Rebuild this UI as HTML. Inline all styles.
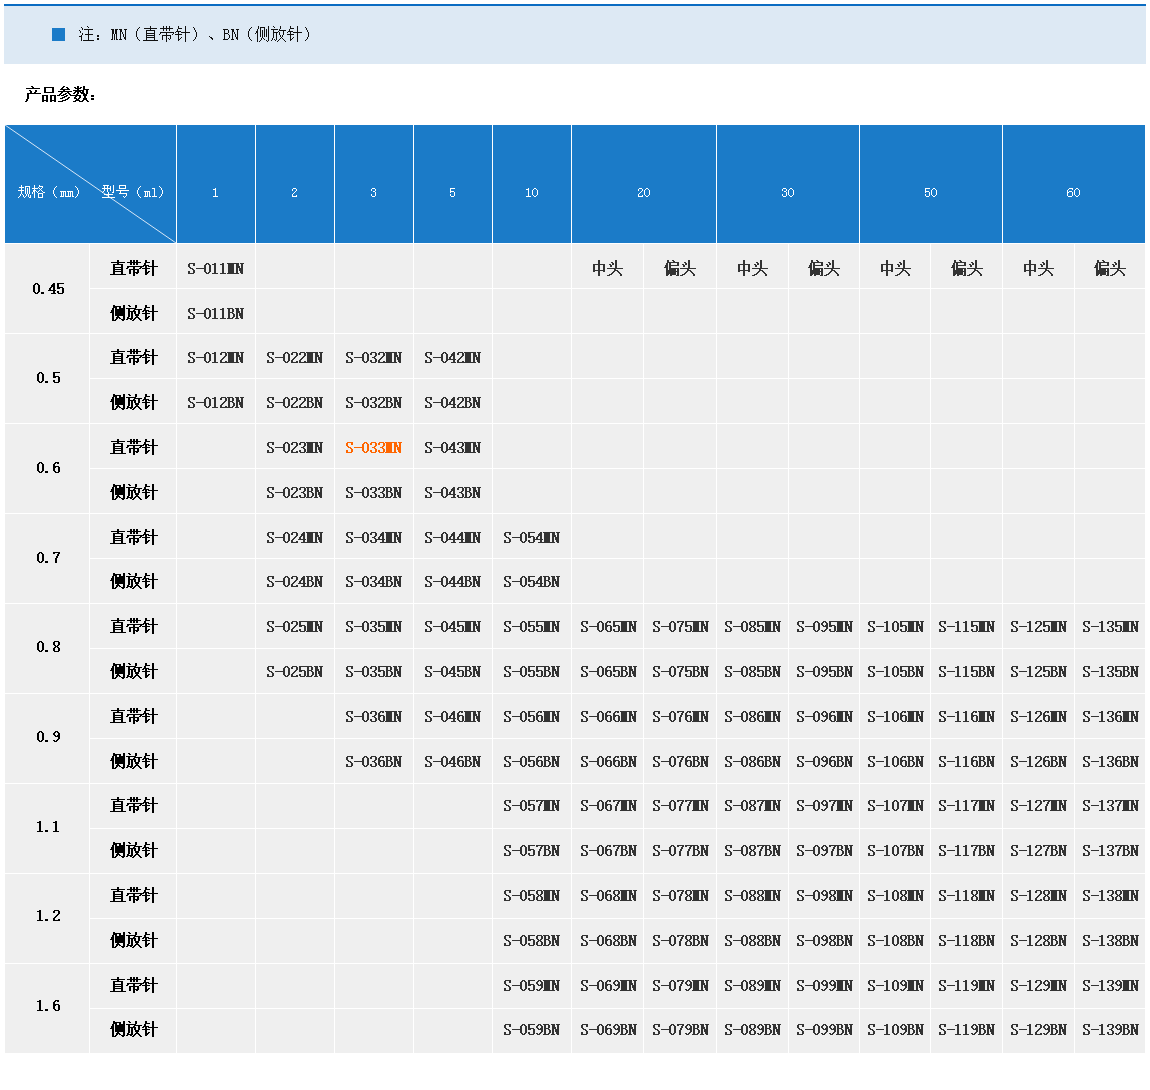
<!DOCTYPE html>
<html lang="zh-CN"><head><meta charset="utf-8"><title>产品参数</title>
<style>
html,body{margin:0;padding:0;background:#fff;}
body{width:1150px;height:1090px;position:relative;overflow:hidden;font-family:"Liberation Serif",serif;color:#222;}
.sr{position:absolute;width:1px;height:1px;overflow:hidden;clip:rect(0 0 0 0);white-space:nowrap;}
svg.g{position:absolute;display:block;overflow:visible;}
svg.m{fill:#333;}
svg.o{fill:#ff6600;}
svg.k{fill:#000;}
svg.w{fill:#fff;}
.note{position:absolute;left:4px;top:4px;width:1142px;height:58px;border-top:2px solid #0a6cc2;background:#dde9f4;}
.note .sq{position:absolute;left:48px;top:22px;width:13px;height:13px;background:#1b7bc8;}
table{position:absolute;left:4px;top:124px;width:1142px;border-collapse:separate;border-spacing:1px;table-layout:fixed;background:#fff;}
th{background:#1b7bc8;color:#fff;font-weight:normal;height:118px;padding:0;position:relative;}
td{background:#efefef;height:44px;padding:0;position:relative;}
</style></head><body>
<svg width="0" height="0" style="position:absolute"><defs><path id="zdz" d="M7 0h2v2h-2zM20 0h2v2h-2zM23 0h2v2h-2zM26 0h2v2h-2zM35 0h2v2h-2zM1 2h14v1h-14zM17 2h14v1h-14zM35 2h5v1h-5zM7 3h2v1h-2zM20 3h2v2h-2zM23 3h2v2h-2zM26 3h2v2h-2zM34 3h2v2h-2zM3 4h10v1h-10zM42 0h2v6h-2zM33 5h6v1h-6zM3 5h2v2h-2zM11 5h2v2h-2zM17 6h17v1h-17zM38 6h10v1h-10zM35 6h2v2h-2zM3 7h10v1h-10zM17 7h2v1h-2zM30 7h2v1h-2zM23 7h2v2h-2zM3 8h2v1h-2zM11 8h2v1h-2zM16 8h2v1h-2zM29 8h2v1h-2zM32 8h8v1h-8zM3 9h10v1h-10zM19 9h10v1h-10zM3 10h2v1h-2zM11 10h2v1h-2zM35 9h2v3h-2zM23 10h2v2h-2zM27 10h2v2h-2zM3 11h10v1h-10zM38 11h2v1h-2zM23 12h6v1h-6zM35 12h4v1h-4zM19 10h2v4h-2zM3 12h2v2h-2zM11 12h2v2h-2zM26 13h2v1h-2zM35 13h3v1h-3zM0 14h16v1h-16zM35 14h2v1h-2zM42 7h2v9h-2zM23 13h2v3h-2z"/><path id="cfz" d="M3 0h2v1h-2zM18 0h2v1h-2zM35 0h2v2h-2zM3 1h8v1h-8zM19 1h2v1h-2zM13 0h2v3h-2zM25 0h2v3h-2zM3 2h4v1h-4zM9 2h2v1h-2zM35 2h5v1h-5zM5 3h2v1h-2zM9 3h6v1h-6zM16 3h10v1h-10zM2 3h2v2h-2zM34 3h2v2h-2zM24 4h8v1h-8zM42 0h2v6h-2zM18 4h2v2h-2zM23 5h2v1h-2zM33 5h6v1h-6zM1 5h3v2h-3zM18 6h8v1h-8zM32 6h2v1h-2zM38 6h10v1h-10zM35 6h2v2h-2zM0 7h4v1h-4zM28 5h2v4h-2zM24 7h2v2h-2zM32 8h8v1h-8zM5 4h10v7h-10zM25 9h4v2h-4zM18 7h2v5h-2zM35 9h2v3h-2zM7 11h2v1h-2zM26 11h2v1h-2zM38 11h2v1h-2zM21 7h2v6h-2zM6 12h4v1h-4zM17 12h2v1h-2zM25 12h4v1h-4zM35 12h4v1h-4zM13 11h2v3h-2zM6 13h2v1h-2zM9 13h2v1h-2zM17 13h6v1h-6zM24 13h2v1h-2zM28 13h2v1h-2zM35 13h3v1h-3zM2 8h2v7h-2zM5 14h2v1h-2zM11 14h4v1h-4zM16 14h2v1h-2zM20 14h2v1h-2zM23 14h2v1h-2zM29 14h2v1h-2zM35 14h2v1h-2zM42 7h2v9h-2zM2 15h4v1h-4zM12 15h2v1h-2zM22 15h2v1h-2zM30 15h2v1h-2z"/><path id="zt" d="M18 2h2v1h-2zM5 0h2v4h-2zM19 3h2v2h-2zM0 4h12v1h-12zM16 4h2v1h-2zM17 5h2v2h-2zM22 0h2v8h-2zM14 8h16v1h-16zM0 5h2v5h-2zM5 5h2v5h-2zM10 5h2v5h-2zM21 9h2v1h-2zM0 10h12v1h-12zM21 10h4v1h-4zM0 11h2v1h-2zM10 11h2v1h-2zM20 11h2v1h-2zM24 11h2v1h-2zM19 12h2v1h-2zM25 12h2v1h-2zM18 13h2v1h-2zM26 13h2v1h-2zM16 14h3v1h-3zM5 11h2v5h-2zM27 14h2v2h-2zM14 15h3v1h-3z"/><path id="pt" d="M8 0h2v1h-2zM3 0h2v2h-2zM9 1h2v1h-2zM3 2h12v1h-12zM20 2h2v1h-2zM2 3h2v2h-2zM5 3h2v2h-2zM13 3h2v2h-2zM21 3h2v2h-2zM18 4h2v1h-2zM5 5h10v1h-10zM1 5h3v2h-3zM19 5h2v2h-2zM24 0h2v8h-2zM5 6h2v2h-2zM0 7h4v1h-4zM5 8h10v1h-10zM16 8h16v1h-16zM2 8h2v2h-2zM5 9h7v1h-7zM23 9h2v1h-2zM13 9h2v2h-2zM2 10h10v1h-10zM23 10h4v1h-4zM2 11h13v1h-13zM22 11h2v1h-2zM26 11h2v1h-2zM21 12h2v1h-2zM27 12h2v1h-2zM2 12h10v2h-10zM20 13h2v1h-2zM28 13h2v1h-2zM13 12h2v3h-2zM2 14h3v1h-3zM6 14h6v1h-6zM18 14h3v1h-3zM29 14h2v2h-2zM2 15h2v1h-2zM6 15h2v1h-2zM12 15h3v1h-3zM16 15h3v1h-3z"/><path id="ttl" d="M6 0h2v1h-2zM38 0h2v1h-2zM52 0h2v2h-2zM7 1h2v1h-2zM19 1h10v1h-10zM37 1h2v1h-2zM41 1h2v1h-2zM49 1h2v1h-2zM55 1h2v1h-2zM58 0h2v3h-2zM1 2h14v1h-14zM36 2h2v1h-2zM42 2h2v1h-2zM50 2h6v1h-6zM35 3h10v1h-10zM52 3h2v1h-2zM58 3h6v1h-6zM4 4h2v1h-2zM38 4h2v1h-2zM48 4h11v1h-11zM19 2h2v4h-2zM27 2h2v4h-2zM10 4h2v2h-2zM33 5h14v1h-14zM50 5h6v1h-6zM57 5h2v1h-2zM5 5h2v2h-2zM9 6h2v1h-2zM19 6h10v1h-10zM36 6h2v1h-2zM42 6h2v1h-2zM49 6h2v1h-2zM55 6h4v1h-4zM61 4h2v4h-2zM52 6h2v2h-2zM2 7h14v1h-14zM35 7h2v1h-2zM40 7h2v1h-2zM43 7h2v1h-2zM48 7h2v1h-2zM56 7h4v1h-4zM34 8h2v1h-2zM38 8h3v1h-3zM44 8h2v1h-2zM51 8h2v1h-2zM58 8h4v2h-4zM17 9h6v1h-6zM25 9h6v1h-6zM32 9h3v1h-3zM36 9h3v1h-3zM41 9h2v1h-2zM45 9h11v1h-11zM66 9h3v2h-3zM39 10h3v1h-3zM50 10h2v1h-2zM54 10h2v2h-2zM59 10h2v2h-2zM37 11h3v1h-3zM43 11h2v1h-2zM49 11h2v1h-2zM2 8h2v5h-2zM35 12h3v1h-3zM42 12h2v1h-2zM49 12h3v1h-3zM53 12h2v1h-2zM17 10h2v4h-2zM21 10h2v4h-2zM25 10h2v4h-2zM29 10h2v4h-2zM58 12h4v2h-4zM66 12h3v2h-3zM40 13h3v1h-3zM51 13h3v1h-3zM1 13h2v2h-2zM17 14h6v1h-6zM25 14h6v1h-6zM37 14h4v1h-4zM50 14h5v1h-5zM57 14h2v1h-2zM61 14h2v1h-2zM0 15h2v1h-2zM17 15h2v1h-2zM21 15h2v1h-2zM25 15h2v1h-2zM29 15h2v1h-2zM33 15h5v1h-5zM48 15h3v1h-3zM54 15h4v1h-4zM62 15h2v1h-2z"/><path id="note" d="M8 0h1v1h-1zM194 0h1v1h-1zM71 0h1v2h-1zM84 0h1v2h-1zM87 0h1v2h-1zM90 0h1v2h-1zM99 0h1v2h-1zM211 0h1v2h-1zM2 1h1v1h-1zM9 1h1v1h-1zM60 1h1v1h-1zM114 1h1v1h-1zM172 1h1v1h-1zM181 1h5v1h-5zM195 1h1v1h-1zM226 1h1v1h-1zM179 0h1v3h-1zM201 0h1v3h-1zM59 2h1v1h-1zM65 2h13v1h-13zM81 2h13v1h-13zM99 2h4v1h-4zM171 2h1v1h-1zM211 2h4v1h-4zM3 2h1v2h-1zM115 2h1v2h-1zM227 2h1v2h-1zM5 3h9v1h-9zM32 3h3v1h-3zM36 3h3v1h-3zM40 3h3v1h-3zM45 3h3v1h-3zM71 3h1v1h-1zM144 3h5v1h-5zM152 3h3v1h-3zM157 3h3v1h-3zM192 3h7v1h-7zM200 3h1v1h-1zM58 3h1v2h-1zM84 3h1v2h-1zM87 3h1v2h-1zM90 3h1v2h-1zM98 3h1v2h-1zM170 3h1v2h-1zM178 3h1v2h-1zM210 3h1v2h-1zM0 4h1v1h-1zM67 4h9v1h-9zM200 4h7v1h-7zM106 0h1v6h-1zM218 0h1v6h-1zM41 4h2v2h-2zM116 4h1v2h-1zM153 4h2v2h-2zM194 4h1v2h-1zM228 4h1v2h-1zM97 5h5v1h-5zM199 5h1v1h-1zM209 5h5v1h-5zM145 4h1v3h-1zM149 4h1v3h-1zM1 5h1v2h-1zM67 5h1v2h-1zM75 5h1v2h-1zM177 5h2v2h-2zM81 6h14v1h-14zM96 6h1v1h-1zM102 6h9v1h-9zM194 6h5v1h-5zM208 6h1v1h-1zM214 6h9v1h-9zM9 4h1v4h-1zM33 4h2v4h-2zM36 4h2v4h-2zM43 6h1v2h-1zM99 6h1v2h-1zM155 6h1v2h-1zM211 6h1v2h-1zM67 7h9v1h-9zM81 7h1v1h-1zM94 7h1v1h-1zM145 7h4v1h-4zM176 7h1v1h-1zM204 5h1v4h-1zM200 6h1v3h-1zM3 7h1v2h-1zM87 7h1v2h-1zM6 8h8v1h-8zM67 8h1v1h-1zM75 8h1v1h-1zM80 8h1v1h-1zM93 8h1v1h-1zM96 8h7v1h-7zM149 8h1v1h-1zM208 8h7v1h-7zM2 9h1v1h-1zM67 9h9v1h-9zM83 9h9v1h-9zM181 2h1v9h-1zM185 2h1v9h-1zM187 3h1v8h-1zM46 4h1v7h-1zM158 4h1v7h-1zM57 5h1v6h-1zM169 5h1v6h-1zM117 6h1v5h-1zM229 6h1v5h-1zM44 8h1v3h-1zM156 8h1v3h-1zM18 9h2v2h-2zM201 9h1v2h-1zM203 9h1v2h-1zM0 10h3v1h-3zM67 10h1v1h-1zM75 10h1v1h-1zM130 10h1v1h-1zM183 4h1v8h-1zM194 7h1v5h-1zM150 9h1v3h-1zM67 11h9v1h-9zM102 11h1v1h-1zM131 11h2v1h-2zM202 11h1v1h-1zM214 11h1v1h-1zM41 6h1v7h-1zM153 6h1v7h-1zM33 8h1v5h-1zM37 8h1v5h-1zM145 8h1v5h-1zM99 9h1v4h-1zM211 9h1v4h-1zM91 10h1v3h-1zM45 11h2v2h-2zM58 11h1v2h-1zM116 11h1v2h-1zM157 11h2v2h-2zM170 11h1v2h-1zM228 11h1v2h-1zM89 12h1v1h-1zM101 12h1v1h-1zM132 12h2v1h-2zM149 12h1v1h-1zM184 12h1v1h-1zM201 12h1v1h-1zM203 12h1v1h-1zM213 12h1v1h-1zM197 7h1v7h-1zM35 8h1v6h-1zM9 9h1v5h-1zM83 10h1v4h-1zM18 12h2v2h-2zM67 12h1v2h-1zM75 12h1v2h-1zM182 12h1v2h-1zM193 12h1v2h-1zM32 13h2v1h-2zM37 13h2v1h-2zM40 13h3v1h-3zM46 13h1v1h-1zM59 13h1v1h-1zM90 13h1v1h-1zM99 13h2v1h-2zM115 13h1v1h-1zM133 13h1v1h-1zM144 13h5v1h-5zM152 13h3v1h-3zM158 13h1v1h-1zM171 13h1v1h-1zM185 13h1v1h-1zM195 13h1v1h-1zM200 13h1v1h-1zM204 13h1v1h-1zM211 13h2v1h-2zM227 13h1v1h-1zM189 0h1v15h-1zM2 11h1v4h-1zM4 14h11v1h-11zM60 14h1v1h-1zM64 14h15v1h-15zM99 14h1v1h-1zM114 14h1v1h-1zM172 14h1v1h-1zM181 14h1v1h-1zM187 14h1v1h-1zM192 14h1v1h-1zM196 14h1v1h-1zM199 14h1v1h-1zM205 14h1v1h-1zM211 14h1v1h-1zM226 14h1v1h-1zM106 7h1v9h-1zM178 7h1v9h-1zM218 7h1v9h-1zM87 10h1v6h-1zM180 15h1v1h-1zM188 15h1v1h-1zM198 15h1v1h-1zM206 15h1v1h-1z"/><path id="gg" d="M21 0h1v1h-1zM3 0h1v2h-1zM7 1h5v1h-5zM21 1h4v1h-4zM38 1h1v1h-1zM57 1h1v1h-1zM16 0h1v3h-1zM1 2h5v1h-5zM20 2h1v1h-1zM24 2h1v1h-1zM37 2h1v1h-1zM58 2h1v1h-1zM14 3h6v1h-6zM21 3h1v1h-1zM23 3h1v1h-1zM3 3h1v2h-1zM36 3h1v2h-1zM59 3h1v2h-1zM16 4h1v1h-1zM22 4h1v1h-1zM0 5h6v1h-6zM15 5h3v1h-3zM21 5h1v1h-1zM23 5h1v1h-1zM15 6h2v1h-2zM18 6h1v1h-1zM20 6h1v1h-1zM24 6h1v1h-1zM42 6h6v1h-6zM49 6h6v1h-6zM19 7h1v1h-1zM25 7h2v1h-2zM7 2h1v7h-1zM11 2h1v7h-1zM9 3h1v6h-1zM35 5h1v4h-1zM60 5h1v4h-1zM3 6h1v3h-1zM14 7h1v2h-1zM20 8h5v1h-5zM4 9h1v1h-1zM43 7h1v4h-1zM45 7h1v4h-1zM47 7h1v4h-1zM50 7h1v4h-1zM52 7h1v4h-1zM54 7h1v4h-1zM2 9h1v2h-1zM8 9h1v2h-1zM36 9h1v2h-1zM59 9h1v2h-1zM10 9h1v3h-1zM20 9h1v3h-1zM24 9h1v3h-1zM5 10h1v2h-1zM12 10h1v2h-1zM1 11h1v1h-1zM7 11h1v1h-1zM37 11h1v1h-1zM42 11h4v1h-4zM47 11h6v1h-6zM54 11h2v1h-2zM58 11h1v1h-1zM16 7h1v6h-1zM0 12h1v1h-1zM6 12h1v1h-1zM11 12h2v1h-2zM20 12h5v1h-5zM38 12h1v1h-1zM57 12h1v1h-1z"/><path id="xh" d="M1 0h6v1h-6zM17 0h7v1h-7zM38 1h1v1h-1zM57 1h1v1h-1zM2 1h1v2h-1zM5 1h1v2h-1zM8 1h1v2h-1zM17 1h1v2h-1zM23 1h1v2h-1zM37 2h1v1h-1zM58 2h1v1h-1zM0 3h9v1h-9zM17 3h7v1h-7zM50 3h3v1h-3zM36 3h1v2h-1zM59 3h1v2h-1zM2 4h1v2h-1zM8 4h1v2h-1zM14 5h13v1h-13zM11 0h1v7h-1zM5 4h1v3h-1zM1 6h1v1h-1zM42 6h6v1h-6zM18 6h1v2h-1zM0 7h1v1h-1zM10 7h2v1h-2zM35 5h1v4h-1zM60 5h1v4h-1zM6 7h1v2h-1zM17 8h8v1h-8zM2 9h9v1h-9zM52 4h1v7h-1zM43 7h1v4h-1zM45 7h1v4h-1zM47 7h1v4h-1zM24 9h1v2h-1zM36 9h1v2h-1zM59 9h1v2h-1zM6 10h1v2h-1zM21 11h1v1h-1zM23 11h1v1h-1zM37 11h1v1h-1zM42 11h4v1h-4zM47 11h2v1h-2zM50 11h5v1h-5zM58 11h1v1h-1zM0 12h13v1h-13zM22 12h1v1h-1zM38 12h1v1h-1zM57 12h1v1h-1z"/><path id="bS" d="M2 0h6v1h-6zM6 1h2v2h-2zM1 1h2v3h-2zM2 4h2v1h-2zM3 5h3v1h-3zM5 6h2v1h-2zM6 7h2v3h-2zM1 8h2v2h-2zM1 10h6v1h-6z"/><path id="bd" d="M1 5h8v1h-8z"/><path id="bp" d="M1 9h3v2h-3z"/><path id="b0" d="M3 0h3v1h-3zM2 1h2v1h-2zM5 1h2v1h-2zM1 2h2v7h-2zM6 2h2v7h-2zM2 9h2v1h-2zM5 9h2v1h-2zM3 10h3v1h-3z"/><path id="b1" d="M3 0h2v1h-2zM1 1h4v1h-4zM3 2h2v8h-2zM1 10h6v1h-6z"/><path id="b2" d="M2 0h5v1h-5zM1 1h2v2h-2zM6 1h2v3h-2zM5 4h2v1h-2zM4 5h2v1h-2zM3 6h2v1h-2zM2 7h2v1h-2zM1 8h2v2h-2zM6 9h2v1h-2zM1 10h7v1h-7z"/><path id="b3" d="M2 0h5v1h-5zM1 1h2v2h-2zM6 1h2v3h-2zM5 4h2v1h-2zM3 5h3v1h-3zM5 6h2v1h-2zM6 7h2v3h-2zM1 8h2v2h-2zM2 10h5v1h-5z"/><path id="b4" d="M5 0h2v1h-2zM4 1h3v1h-3zM3 2h4v2h-4zM2 4h2v1h-2zM5 4h2v3h-2zM1 5h2v2h-2zM0 7h8v1h-8zM5 8h2v2h-2zM3 10h5v1h-5z"/><path id="b5" d="M1 0h7v1h-7zM1 1h2v3h-2zM1 4h6v1h-6zM1 5h3v1h-3zM6 5h2v5h-2zM1 8h2v2h-2zM2 10h5v1h-5z"/><path id="b6" d="M3 0h4v1h-4zM2 1h2v1h-2zM5 1h2v1h-2zM1 2h2v2h-2zM1 4h6v1h-6zM1 5h3v1h-3zM1 6h2v3h-2zM6 5h2v5h-2zM2 9h2v1h-2zM3 10h4v1h-4z"/><path id="b7" d="M1 0h7v1h-7zM1 1h2v1h-2zM6 1h2v1h-2zM5 2h2v2h-2zM4 4h2v2h-2zM3 6h2v5h-2z"/><path id="b8" d="M2 0h5v1h-5zM1 1h2v3h-2zM6 1h2v3h-2zM2 4h2v1h-2zM5 4h2v1h-2zM3 5h3v1h-3zM2 6h2v1h-2zM5 6h2v1h-2zM1 7h2v3h-2zM6 7h2v3h-2zM2 10h5v1h-5z"/><path id="b9" d="M3 0h3v1h-3zM2 1h2v1h-2zM5 1h2v1h-2zM1 2h2v2h-2zM6 2h2v2h-2zM2 4h2v1h-2zM5 4h3v1h-3zM3 5h5v1h-5zM6 6h2v2h-2zM5 8h2v1h-2zM1 9h2v1h-2zM4 9h2v1h-2zM2 10h3v1h-3z"/><path id="bB" d="M0 0h6v1h-6zM1 1h2v3h-2zM5 1h2v3h-2zM1 4h5v1h-5zM5 5h2v1h-2zM6 6h2v3h-2zM1 5h2v5h-2zM5 9h2v1h-2zM0 10h6v1h-6z"/><path id="bN" d="M0 0h4v1h-4zM5 0h4v1h-4zM1 1h3v2h-3zM6 1h2v4h-2zM1 3h4v2h-4zM4 5h4v3h-4zM1 5h2v5h-2zM5 8h3v2h-3zM0 10h4v1h-4zM6 10h2v1h-2z"/><path id="bM" d="M0 0h8v1h-8zM1 1h6v9h-6zM0 10h8v1h-8z"/><path id="h0" d="M2 0h2v1h-2zM1 1h1v1h-1zM4 1h1v1h-1zM0 2h1v5h-1zM5 2h1v5h-1zM1 7h1v1h-1zM4 7h1v1h-1zM2 8h2v1h-2z"/><path id="h1" d="M2 0h1v1h-1zM0 1h3v1h-3zM2 2h1v6h-1zM0 8h5v1h-5z"/><path id="h2" d="M1 0h3v1h-3zM0 1h1v2h-1zM4 1h1v2h-1zM3 3h1v1h-1zM2 4h1v1h-1zM1 5h1v1h-1zM0 6h1v2h-1zM4 7h1v1h-1zM0 8h5v1h-5z"/><path id="h3" d="M1 0h3v1h-3zM0 1h1v2h-1zM4 1h1v2h-1zM2 3h2v1h-2zM4 4h1v4h-1zM0 6h1v2h-1zM1 8h3v1h-3z"/><path id="h5" d="M0 0h5v1h-5zM0 1h1v2h-1zM0 3h4v1h-4zM0 4h1v1h-1zM4 4h1v4h-1zM0 6h1v2h-1zM1 8h3v1h-3z"/><path id="h6" d="M2 0h4v1h-4zM1 1h1v1h-1zM5 1h1v1h-1zM0 2h1v2h-1zM2 3h3v1h-3zM0 4h2v1h-2zM5 4h1v4h-1zM0 5h1v3h-1zM1 8h4v1h-4z"/></defs></svg>
<div class="note"><div class="sq"></div><svg class="g" style="left:75px;top:20px" width="230" height="16"><use href="#note" fill="#111"/></svg><span class="sr">注：MN（直带针）、BN（侧放针）</span></div>
<svg class="g" style="left:25px;top:86px" width="69" height="16"><use href="#ttl" fill="#000"/></svg><span class="sr">产品参数：</span>
<table>
<colgroup><col style="width:84px"><col style="width:86px"><col style="width:78px"><col style="width:78px"><col style="width:78px"><col style="width:78px"><col style="width:78px"><col style="width:71px"><col style="width:72px"><col style="width:71px"><col style="width:70px"><col style="width:70px"><col style="width:71px"><col style="width:71px"><col style="width:70px"></colgroup>
<tr><th colspan="2"><svg class="g" style="left:0;top:0" width="171" height="118"><line x1="0" y1="0" x2="171" y2="118" stroke="#d8e7f6" stroke-width="1"/></svg><svg class="g" style="left:13px;top:60px" width="61" height="13"><use href="#gg" fill="#fff"/></svg><svg class="g" style="left:97px;top:60px" width="61" height="13"><use href="#xh" fill="#fff"/></svg><span class="sr">规格（mm） 型号（ml）</span></th><th><svg class="g w" style="left:36px;top:63px" width="7" height="9"><use href="#h1" x="0"/></svg><span class="sr">1</span></th><th><svg class="g w" style="left:36px;top:63px" width="7" height="9"><use href="#h2" x="0"/></svg><span class="sr">2</span></th><th><svg class="g w" style="left:36px;top:63px" width="7" height="9"><use href="#h3" x="0"/></svg><span class="sr">3</span></th><th><svg class="g w" style="left:36px;top:63px" width="7" height="9"><use href="#h5" x="0"/></svg><span class="sr">5</span></th><th><svg class="g w" style="left:33px;top:63px" width="13" height="9"><use href="#h1" x="0"/><use href="#h0" x="6"/></svg><span class="sr">10</span></th><th colspan="2"><svg class="g w" style="left:66px;top:63px" width="13" height="9"><use href="#h2" x="0"/><use href="#h0" x="6"/></svg><span class="sr">20</span></th><th colspan="2"><svg class="g w" style="left:65px;top:63px" width="13" height="9"><use href="#h3" x="0"/><use href="#h0" x="6"/></svg><span class="sr">30</span></th><th colspan="2"><svg class="g w" style="left:65px;top:63px" width="13" height="9"><use href="#h5" x="0"/><use href="#h0" x="6"/></svg><span class="sr">50</span></th><th colspan="2"><svg class="g w" style="left:65px;top:63px" width="13" height="9"><use href="#h6" x="-1"/><use href="#h0" x="6"/></svg><span class="sr">60</span></th></tr>
<tr><td rowspan="2"><svg class="g k" style="left:27px;top:39px" width="33" height="11"><use href="#b0" x="0"/><use href="#bp" x="8"/><use href="#b4" x="16"/><use href="#b5" x="24"/></svg><span class="sr">0.45</span></td><td><svg class="g" style="left:20px;top:16px" width="48" height="16"><use href="#zdz" fill="#000"/></svg><span class="sr">直带针</span></td><td><svg class="g m" style="left:10px;top:19px" width="57" height="11"><use href="#bS" x="0"/><use href="#bd" x="8"/><use href="#b0" x="16"/><use href="#b1" x="24"/><use href="#b1" x="32"/><use href="#bM" x="40"/><use href="#bN" x="48"/></svg><span class="sr">S-011MN</span></td><td></td><td></td><td></td><td></td><td><svg class="g" style="left:21px;top:16px" width="30" height="16"><use href="#zt" fill="#333"/></svg><span class="sr">中头</span></td><td><svg class="g" style="left:20px;top:16px" width="32" height="16"><use href="#pt" fill="#333"/></svg><span class="sr">偏头</span></td><td><svg class="g" style="left:21px;top:16px" width="30" height="16"><use href="#zt" fill="#333"/></svg><span class="sr">中头</span></td><td><svg class="g" style="left:19px;top:16px" width="32" height="16"><use href="#pt" fill="#333"/></svg><span class="sr">偏头</span></td><td><svg class="g" style="left:21px;top:16px" width="30" height="16"><use href="#zt" fill="#333"/></svg><span class="sr">中头</span></td><td><svg class="g" style="left:20px;top:16px" width="32" height="16"><use href="#pt" fill="#333"/></svg><span class="sr">偏头</span></td><td><svg class="g" style="left:21px;top:16px" width="30" height="16"><use href="#zt" fill="#333"/></svg><span class="sr">中头</span></td><td><svg class="g" style="left:19px;top:16px" width="32" height="16"><use href="#pt" fill="#333"/></svg><span class="sr">偏头</span></td></tr>
<tr><td><svg class="g" style="left:20px;top:16px" width="48" height="16"><use href="#cfz" fill="#000"/></svg><span class="sr">侧放针</span></td><td><svg class="g m" style="left:10px;top:19px" width="57" height="11"><use href="#bS" x="0"/><use href="#bd" x="8"/><use href="#b0" x="16"/><use href="#b1" x="24"/><use href="#b1" x="32"/><use href="#bB" x="40"/><use href="#bN" x="48"/></svg><span class="sr">S-011BN</span></td><td></td><td></td><td></td><td></td><td></td><td></td><td></td><td></td><td></td><td></td><td></td><td></td></tr>
<tr><td rowspan="2"><svg class="g k" style="left:31px;top:38px" width="25" height="11"><use href="#b0" x="0"/><use href="#bp" x="8"/><use href="#b5" x="16"/></svg><span class="sr">0.5</span></td><td><svg class="g" style="left:20px;top:15px" width="48" height="16"><use href="#zdz" fill="#000"/></svg><span class="sr">直带针</span></td><td><svg class="g m" style="left:10px;top:18px" width="57" height="11"><use href="#bS" x="0"/><use href="#bd" x="8"/><use href="#b0" x="16"/><use href="#b1" x="24"/><use href="#b2" x="32"/><use href="#bM" x="40"/><use href="#bN" x="48"/></svg><span class="sr">S-012MN</span></td><td><svg class="g m" style="left:10px;top:18px" width="57" height="11"><use href="#bS" x="0"/><use href="#bd" x="8"/><use href="#b0" x="16"/><use href="#b2" x="24"/><use href="#b2" x="32"/><use href="#bM" x="40"/><use href="#bN" x="48"/></svg><span class="sr">S-022MN</span></td><td><svg class="g m" style="left:10px;top:18px" width="57" height="11"><use href="#bS" x="0"/><use href="#bd" x="8"/><use href="#b0" x="16"/><use href="#b3" x="24"/><use href="#b2" x="32"/><use href="#bM" x="40"/><use href="#bN" x="48"/></svg><span class="sr">S-032MN</span></td><td><svg class="g m" style="left:10px;top:18px" width="57" height="11"><use href="#bS" x="0"/><use href="#bd" x="8"/><use href="#b0" x="16"/><use href="#b4" x="24"/><use href="#b2" x="32"/><use href="#bM" x="40"/><use href="#bN" x="48"/></svg><span class="sr">S-042MN</span></td><td></td><td></td><td></td><td></td><td></td><td></td><td></td><td></td><td></td></tr>
<tr><td><svg class="g" style="left:20px;top:15px" width="48" height="16"><use href="#cfz" fill="#000"/></svg><span class="sr">侧放针</span></td><td><svg class="g m" style="left:10px;top:18px" width="57" height="11"><use href="#bS" x="0"/><use href="#bd" x="8"/><use href="#b0" x="16"/><use href="#b1" x="24"/><use href="#b2" x="32"/><use href="#bB" x="40"/><use href="#bN" x="48"/></svg><span class="sr">S-012BN</span></td><td><svg class="g m" style="left:10px;top:18px" width="57" height="11"><use href="#bS" x="0"/><use href="#bd" x="8"/><use href="#b0" x="16"/><use href="#b2" x="24"/><use href="#b2" x="32"/><use href="#bB" x="40"/><use href="#bN" x="48"/></svg><span class="sr">S-022BN</span></td><td><svg class="g m" style="left:10px;top:18px" width="57" height="11"><use href="#bS" x="0"/><use href="#bd" x="8"/><use href="#b0" x="16"/><use href="#b3" x="24"/><use href="#b2" x="32"/><use href="#bB" x="40"/><use href="#bN" x="48"/></svg><span class="sr">S-032BN</span></td><td><svg class="g m" style="left:10px;top:18px" width="57" height="11"><use href="#bS" x="0"/><use href="#bd" x="8"/><use href="#b0" x="16"/><use href="#b4" x="24"/><use href="#b2" x="32"/><use href="#bB" x="40"/><use href="#bN" x="48"/></svg><span class="sr">S-042BN</span></td><td></td><td></td><td></td><td></td><td></td><td></td><td></td><td></td><td></td></tr>
<tr><td rowspan="2"><svg class="g k" style="left:31px;top:38px" width="25" height="11"><use href="#b0" x="0"/><use href="#bp" x="8"/><use href="#b6" x="16"/></svg><span class="sr">0.6</span></td><td><svg class="g" style="left:20px;top:15px" width="48" height="16"><use href="#zdz" fill="#000"/></svg><span class="sr">直带针</span></td><td></td><td><svg class="g m" style="left:10px;top:18px" width="57" height="11"><use href="#bS" x="0"/><use href="#bd" x="8"/><use href="#b0" x="16"/><use href="#b2" x="24"/><use href="#b3" x="32"/><use href="#bM" x="40"/><use href="#bN" x="48"/></svg><span class="sr">S-023MN</span></td><td><svg class="g o" style="left:10px;top:18px" width="57" height="11"><use href="#bS" x="0"/><use href="#bd" x="8"/><use href="#b0" x="16"/><use href="#b3" x="24"/><use href="#b3" x="32"/><use href="#bM" x="40"/><use href="#bN" x="48"/></svg><span class="sr">S-033MN</span></td><td><svg class="g m" style="left:10px;top:18px" width="57" height="11"><use href="#bS" x="0"/><use href="#bd" x="8"/><use href="#b0" x="16"/><use href="#b4" x="24"/><use href="#b3" x="32"/><use href="#bM" x="40"/><use href="#bN" x="48"/></svg><span class="sr">S-043MN</span></td><td></td><td></td><td></td><td></td><td></td><td></td><td></td><td></td><td></td></tr>
<tr><td><svg class="g" style="left:20px;top:15px" width="48" height="16"><use href="#cfz" fill="#000"/></svg><span class="sr">侧放针</span></td><td></td><td><svg class="g m" style="left:10px;top:18px" width="57" height="11"><use href="#bS" x="0"/><use href="#bd" x="8"/><use href="#b0" x="16"/><use href="#b2" x="24"/><use href="#b3" x="32"/><use href="#bB" x="40"/><use href="#bN" x="48"/></svg><span class="sr">S-023BN</span></td><td><svg class="g m" style="left:10px;top:18px" width="57" height="11"><use href="#bS" x="0"/><use href="#bd" x="8"/><use href="#b0" x="16"/><use href="#b3" x="24"/><use href="#b3" x="32"/><use href="#bB" x="40"/><use href="#bN" x="48"/></svg><span class="sr">S-033BN</span></td><td><svg class="g m" style="left:10px;top:18px" width="57" height="11"><use href="#bS" x="0"/><use href="#bd" x="8"/><use href="#b0" x="16"/><use href="#b4" x="24"/><use href="#b3" x="32"/><use href="#bB" x="40"/><use href="#bN" x="48"/></svg><span class="sr">S-043BN</span></td><td></td><td></td><td></td><td></td><td></td><td></td><td></td><td></td><td></td></tr>
<tr><td rowspan="2"><svg class="g k" style="left:31px;top:38px" width="25" height="11"><use href="#b0" x="0"/><use href="#bp" x="8"/><use href="#b7" x="16"/></svg><span class="sr">0.7</span></td><td><svg class="g" style="left:20px;top:15px" width="48" height="16"><use href="#zdz" fill="#000"/></svg><span class="sr">直带针</span></td><td></td><td><svg class="g m" style="left:10px;top:18px" width="57" height="11"><use href="#bS" x="0"/><use href="#bd" x="8"/><use href="#b0" x="16"/><use href="#b2" x="24"/><use href="#b4" x="32"/><use href="#bM" x="40"/><use href="#bN" x="48"/></svg><span class="sr">S-024MN</span></td><td><svg class="g m" style="left:10px;top:18px" width="57" height="11"><use href="#bS" x="0"/><use href="#bd" x="8"/><use href="#b0" x="16"/><use href="#b3" x="24"/><use href="#b4" x="32"/><use href="#bM" x="40"/><use href="#bN" x="48"/></svg><span class="sr">S-034MN</span></td><td><svg class="g m" style="left:10px;top:18px" width="57" height="11"><use href="#bS" x="0"/><use href="#bd" x="8"/><use href="#b0" x="16"/><use href="#b4" x="24"/><use href="#b4" x="32"/><use href="#bM" x="40"/><use href="#bN" x="48"/></svg><span class="sr">S-044MN</span></td><td><svg class="g m" style="left:10px;top:18px" width="57" height="11"><use href="#bS" x="0"/><use href="#bd" x="8"/><use href="#b0" x="16"/><use href="#b5" x="24"/><use href="#b4" x="32"/><use href="#bM" x="40"/><use href="#bN" x="48"/></svg><span class="sr">S-054MN</span></td><td></td><td></td><td></td><td></td><td></td><td></td><td></td><td></td></tr>
<tr><td><svg class="g" style="left:20px;top:14px" width="48" height="16"><use href="#cfz" fill="#000"/></svg><span class="sr">侧放针</span></td><td></td><td><svg class="g m" style="left:10px;top:17px" width="57" height="11"><use href="#bS" x="0"/><use href="#bd" x="8"/><use href="#b0" x="16"/><use href="#b2" x="24"/><use href="#b4" x="32"/><use href="#bB" x="40"/><use href="#bN" x="48"/></svg><span class="sr">S-024BN</span></td><td><svg class="g m" style="left:10px;top:17px" width="57" height="11"><use href="#bS" x="0"/><use href="#bd" x="8"/><use href="#b0" x="16"/><use href="#b3" x="24"/><use href="#b4" x="32"/><use href="#bB" x="40"/><use href="#bN" x="48"/></svg><span class="sr">S-034BN</span></td><td><svg class="g m" style="left:10px;top:17px" width="57" height="11"><use href="#bS" x="0"/><use href="#bd" x="8"/><use href="#b0" x="16"/><use href="#b4" x="24"/><use href="#b4" x="32"/><use href="#bB" x="40"/><use href="#bN" x="48"/></svg><span class="sr">S-044BN</span></td><td><svg class="g m" style="left:10px;top:17px" width="57" height="11"><use href="#bS" x="0"/><use href="#bd" x="8"/><use href="#b0" x="16"/><use href="#b5" x="24"/><use href="#b4" x="32"/><use href="#bB" x="40"/><use href="#bN" x="48"/></svg><span class="sr">S-054BN</span></td><td></td><td></td><td></td><td></td><td></td><td></td><td></td><td></td></tr>
<tr><td rowspan="2"><svg class="g k" style="left:31px;top:37px" width="25" height="11"><use href="#b0" x="0"/><use href="#bp" x="8"/><use href="#b8" x="16"/></svg><span class="sr">0.8</span></td><td><svg class="g" style="left:20px;top:14px" width="48" height="16"><use href="#zdz" fill="#000"/></svg><span class="sr">直带针</span></td><td></td><td><svg class="g m" style="left:10px;top:17px" width="57" height="11"><use href="#bS" x="0"/><use href="#bd" x="8"/><use href="#b0" x="16"/><use href="#b2" x="24"/><use href="#b5" x="32"/><use href="#bM" x="40"/><use href="#bN" x="48"/></svg><span class="sr">S-025MN</span></td><td><svg class="g m" style="left:10px;top:17px" width="57" height="11"><use href="#bS" x="0"/><use href="#bd" x="8"/><use href="#b0" x="16"/><use href="#b3" x="24"/><use href="#b5" x="32"/><use href="#bM" x="40"/><use href="#bN" x="48"/></svg><span class="sr">S-035MN</span></td><td><svg class="g m" style="left:10px;top:17px" width="57" height="11"><use href="#bS" x="0"/><use href="#bd" x="8"/><use href="#b0" x="16"/><use href="#b4" x="24"/><use href="#b5" x="32"/><use href="#bM" x="40"/><use href="#bN" x="48"/></svg><span class="sr">S-045MN</span></td><td><svg class="g m" style="left:10px;top:17px" width="57" height="11"><use href="#bS" x="0"/><use href="#bd" x="8"/><use href="#b0" x="16"/><use href="#b5" x="24"/><use href="#b5" x="32"/><use href="#bM" x="40"/><use href="#bN" x="48"/></svg><span class="sr">S-055MN</span></td><td><svg class="g m" style="left:8px;top:17px" width="57" height="11"><use href="#bS" x="0"/><use href="#bd" x="8"/><use href="#b0" x="16"/><use href="#b6" x="24"/><use href="#b5" x="32"/><use href="#bM" x="40"/><use href="#bN" x="48"/></svg><span class="sr">S-065MN</span></td><td><svg class="g m" style="left:8px;top:17px" width="57" height="11"><use href="#bS" x="0"/><use href="#bd" x="8"/><use href="#b0" x="16"/><use href="#b7" x="24"/><use href="#b5" x="32"/><use href="#bM" x="40"/><use href="#bN" x="48"/></svg><span class="sr">S-075MN</span></td><td><svg class="g m" style="left:7px;top:17px" width="57" height="11"><use href="#bS" x="0"/><use href="#bd" x="8"/><use href="#b0" x="16"/><use href="#b8" x="24"/><use href="#b5" x="32"/><use href="#bM" x="40"/><use href="#bN" x="48"/></svg><span class="sr">S-085MN</span></td><td><svg class="g m" style="left:7px;top:17px" width="57" height="11"><use href="#bS" x="0"/><use href="#bd" x="8"/><use href="#b0" x="16"/><use href="#b9" x="24"/><use href="#b5" x="32"/><use href="#bM" x="40"/><use href="#bN" x="48"/></svg><span class="sr">S-095MN</span></td><td><svg class="g m" style="left:7px;top:17px" width="57" height="11"><use href="#bS" x="0"/><use href="#bd" x="8"/><use href="#b1" x="16"/><use href="#b0" x="24"/><use href="#b5" x="32"/><use href="#bM" x="40"/><use href="#bN" x="48"/></svg><span class="sr">S-105MN</span></td><td><svg class="g m" style="left:7px;top:17px" width="57" height="11"><use href="#bS" x="0"/><use href="#bd" x="8"/><use href="#b1" x="16"/><use href="#b1" x="24"/><use href="#b5" x="32"/><use href="#bM" x="40"/><use href="#bN" x="48"/></svg><span class="sr">S-115MN</span></td><td><svg class="g m" style="left:7px;top:17px" width="57" height="11"><use href="#bS" x="0"/><use href="#bd" x="8"/><use href="#b1" x="16"/><use href="#b2" x="24"/><use href="#b5" x="32"/><use href="#bM" x="40"/><use href="#bN" x="48"/></svg><span class="sr">S-125MN</span></td><td><svg class="g m" style="left:7px;top:17px" width="57" height="11"><use href="#bS" x="0"/><use href="#bd" x="8"/><use href="#b1" x="16"/><use href="#b3" x="24"/><use href="#b5" x="32"/><use href="#bM" x="40"/><use href="#bN" x="48"/></svg><span class="sr">S-135MN</span></td></tr>
<tr><td><svg class="g" style="left:20px;top:14px" width="48" height="16"><use href="#cfz" fill="#000"/></svg><span class="sr">侧放针</span></td><td></td><td><svg class="g m" style="left:10px;top:17px" width="57" height="11"><use href="#bS" x="0"/><use href="#bd" x="8"/><use href="#b0" x="16"/><use href="#b2" x="24"/><use href="#b5" x="32"/><use href="#bB" x="40"/><use href="#bN" x="48"/></svg><span class="sr">S-025BN</span></td><td><svg class="g m" style="left:10px;top:17px" width="57" height="11"><use href="#bS" x="0"/><use href="#bd" x="8"/><use href="#b0" x="16"/><use href="#b3" x="24"/><use href="#b5" x="32"/><use href="#bB" x="40"/><use href="#bN" x="48"/></svg><span class="sr">S-035BN</span></td><td><svg class="g m" style="left:10px;top:17px" width="57" height="11"><use href="#bS" x="0"/><use href="#bd" x="8"/><use href="#b0" x="16"/><use href="#b4" x="24"/><use href="#b5" x="32"/><use href="#bB" x="40"/><use href="#bN" x="48"/></svg><span class="sr">S-045BN</span></td><td><svg class="g m" style="left:10px;top:17px" width="57" height="11"><use href="#bS" x="0"/><use href="#bd" x="8"/><use href="#b0" x="16"/><use href="#b5" x="24"/><use href="#b5" x="32"/><use href="#bB" x="40"/><use href="#bN" x="48"/></svg><span class="sr">S-055BN</span></td><td><svg class="g m" style="left:8px;top:17px" width="57" height="11"><use href="#bS" x="0"/><use href="#bd" x="8"/><use href="#b0" x="16"/><use href="#b6" x="24"/><use href="#b5" x="32"/><use href="#bB" x="40"/><use href="#bN" x="48"/></svg><span class="sr">S-065BN</span></td><td><svg class="g m" style="left:8px;top:17px" width="57" height="11"><use href="#bS" x="0"/><use href="#bd" x="8"/><use href="#b0" x="16"/><use href="#b7" x="24"/><use href="#b5" x="32"/><use href="#bB" x="40"/><use href="#bN" x="48"/></svg><span class="sr">S-075BN</span></td><td><svg class="g m" style="left:7px;top:17px" width="57" height="11"><use href="#bS" x="0"/><use href="#bd" x="8"/><use href="#b0" x="16"/><use href="#b8" x="24"/><use href="#b5" x="32"/><use href="#bB" x="40"/><use href="#bN" x="48"/></svg><span class="sr">S-085BN</span></td><td><svg class="g m" style="left:7px;top:17px" width="57" height="11"><use href="#bS" x="0"/><use href="#bd" x="8"/><use href="#b0" x="16"/><use href="#b9" x="24"/><use href="#b5" x="32"/><use href="#bB" x="40"/><use href="#bN" x="48"/></svg><span class="sr">S-095BN</span></td><td><svg class="g m" style="left:7px;top:17px" width="57" height="11"><use href="#bS" x="0"/><use href="#bd" x="8"/><use href="#b1" x="16"/><use href="#b0" x="24"/><use href="#b5" x="32"/><use href="#bB" x="40"/><use href="#bN" x="48"/></svg><span class="sr">S-105BN</span></td><td><svg class="g m" style="left:7px;top:17px" width="57" height="11"><use href="#bS" x="0"/><use href="#bd" x="8"/><use href="#b1" x="16"/><use href="#b1" x="24"/><use href="#b5" x="32"/><use href="#bB" x="40"/><use href="#bN" x="48"/></svg><span class="sr">S-115BN</span></td><td><svg class="g m" style="left:7px;top:17px" width="57" height="11"><use href="#bS" x="0"/><use href="#bd" x="8"/><use href="#b1" x="16"/><use href="#b2" x="24"/><use href="#b5" x="32"/><use href="#bB" x="40"/><use href="#bN" x="48"/></svg><span class="sr">S-125BN</span></td><td><svg class="g m" style="left:7px;top:17px" width="57" height="11"><use href="#bS" x="0"/><use href="#bd" x="8"/><use href="#b1" x="16"/><use href="#b3" x="24"/><use href="#b5" x="32"/><use href="#bB" x="40"/><use href="#bN" x="48"/></svg><span class="sr">S-135BN</span></td></tr>
<tr><td rowspan="2"><svg class="g k" style="left:31px;top:37px" width="25" height="11"><use href="#b0" x="0"/><use href="#bp" x="8"/><use href="#b9" x="16"/></svg><span class="sr">0.9</span></td><td><svg class="g" style="left:20px;top:14px" width="48" height="16"><use href="#zdz" fill="#000"/></svg><span class="sr">直带针</span></td><td></td><td></td><td><svg class="g m" style="left:10px;top:17px" width="57" height="11"><use href="#bS" x="0"/><use href="#bd" x="8"/><use href="#b0" x="16"/><use href="#b3" x="24"/><use href="#b6" x="32"/><use href="#bM" x="40"/><use href="#bN" x="48"/></svg><span class="sr">S-036MN</span></td><td><svg class="g m" style="left:10px;top:17px" width="57" height="11"><use href="#bS" x="0"/><use href="#bd" x="8"/><use href="#b0" x="16"/><use href="#b4" x="24"/><use href="#b6" x="32"/><use href="#bM" x="40"/><use href="#bN" x="48"/></svg><span class="sr">S-046MN</span></td><td><svg class="g m" style="left:10px;top:17px" width="57" height="11"><use href="#bS" x="0"/><use href="#bd" x="8"/><use href="#b0" x="16"/><use href="#b5" x="24"/><use href="#b6" x="32"/><use href="#bM" x="40"/><use href="#bN" x="48"/></svg><span class="sr">S-056MN</span></td><td><svg class="g m" style="left:8px;top:17px" width="57" height="11"><use href="#bS" x="0"/><use href="#bd" x="8"/><use href="#b0" x="16"/><use href="#b6" x="24"/><use href="#b6" x="32"/><use href="#bM" x="40"/><use href="#bN" x="48"/></svg><span class="sr">S-066MN</span></td><td><svg class="g m" style="left:8px;top:17px" width="57" height="11"><use href="#bS" x="0"/><use href="#bd" x="8"/><use href="#b0" x="16"/><use href="#b7" x="24"/><use href="#b6" x="32"/><use href="#bM" x="40"/><use href="#bN" x="48"/></svg><span class="sr">S-076MN</span></td><td><svg class="g m" style="left:7px;top:17px" width="57" height="11"><use href="#bS" x="0"/><use href="#bd" x="8"/><use href="#b0" x="16"/><use href="#b8" x="24"/><use href="#b6" x="32"/><use href="#bM" x="40"/><use href="#bN" x="48"/></svg><span class="sr">S-086MN</span></td><td><svg class="g m" style="left:7px;top:17px" width="57" height="11"><use href="#bS" x="0"/><use href="#bd" x="8"/><use href="#b0" x="16"/><use href="#b9" x="24"/><use href="#b6" x="32"/><use href="#bM" x="40"/><use href="#bN" x="48"/></svg><span class="sr">S-096MN</span></td><td><svg class="g m" style="left:7px;top:17px" width="57" height="11"><use href="#bS" x="0"/><use href="#bd" x="8"/><use href="#b1" x="16"/><use href="#b0" x="24"/><use href="#b6" x="32"/><use href="#bM" x="40"/><use href="#bN" x="48"/></svg><span class="sr">S-106MN</span></td><td><svg class="g m" style="left:7px;top:17px" width="57" height="11"><use href="#bS" x="0"/><use href="#bd" x="8"/><use href="#b1" x="16"/><use href="#b1" x="24"/><use href="#b6" x="32"/><use href="#bM" x="40"/><use href="#bN" x="48"/></svg><span class="sr">S-116MN</span></td><td><svg class="g m" style="left:7px;top:17px" width="57" height="11"><use href="#bS" x="0"/><use href="#bd" x="8"/><use href="#b1" x="16"/><use href="#b2" x="24"/><use href="#b6" x="32"/><use href="#bM" x="40"/><use href="#bN" x="48"/></svg><span class="sr">S-126MN</span></td><td><svg class="g m" style="left:7px;top:17px" width="57" height="11"><use href="#bS" x="0"/><use href="#bd" x="8"/><use href="#b1" x="16"/><use href="#b3" x="24"/><use href="#b6" x="32"/><use href="#bM" x="40"/><use href="#bN" x="48"/></svg><span class="sr">S-136MN</span></td></tr>
<tr><td><svg class="g" style="left:20px;top:14px" width="48" height="16"><use href="#cfz" fill="#000"/></svg><span class="sr">侧放针</span></td><td></td><td></td><td><svg class="g m" style="left:10px;top:17px" width="57" height="11"><use href="#bS" x="0"/><use href="#bd" x="8"/><use href="#b0" x="16"/><use href="#b3" x="24"/><use href="#b6" x="32"/><use href="#bB" x="40"/><use href="#bN" x="48"/></svg><span class="sr">S-036BN</span></td><td><svg class="g m" style="left:10px;top:17px" width="57" height="11"><use href="#bS" x="0"/><use href="#bd" x="8"/><use href="#b0" x="16"/><use href="#b4" x="24"/><use href="#b6" x="32"/><use href="#bB" x="40"/><use href="#bN" x="48"/></svg><span class="sr">S-046BN</span></td><td><svg class="g m" style="left:10px;top:17px" width="57" height="11"><use href="#bS" x="0"/><use href="#bd" x="8"/><use href="#b0" x="16"/><use href="#b5" x="24"/><use href="#b6" x="32"/><use href="#bB" x="40"/><use href="#bN" x="48"/></svg><span class="sr">S-056BN</span></td><td><svg class="g m" style="left:8px;top:17px" width="57" height="11"><use href="#bS" x="0"/><use href="#bd" x="8"/><use href="#b0" x="16"/><use href="#b6" x="24"/><use href="#b6" x="32"/><use href="#bB" x="40"/><use href="#bN" x="48"/></svg><span class="sr">S-066BN</span></td><td><svg class="g m" style="left:8px;top:17px" width="57" height="11"><use href="#bS" x="0"/><use href="#bd" x="8"/><use href="#b0" x="16"/><use href="#b7" x="24"/><use href="#b6" x="32"/><use href="#bB" x="40"/><use href="#bN" x="48"/></svg><span class="sr">S-076BN</span></td><td><svg class="g m" style="left:7px;top:17px" width="57" height="11"><use href="#bS" x="0"/><use href="#bd" x="8"/><use href="#b0" x="16"/><use href="#b8" x="24"/><use href="#b6" x="32"/><use href="#bB" x="40"/><use href="#bN" x="48"/></svg><span class="sr">S-086BN</span></td><td><svg class="g m" style="left:7px;top:17px" width="57" height="11"><use href="#bS" x="0"/><use href="#bd" x="8"/><use href="#b0" x="16"/><use href="#b9" x="24"/><use href="#b6" x="32"/><use href="#bB" x="40"/><use href="#bN" x="48"/></svg><span class="sr">S-096BN</span></td><td><svg class="g m" style="left:7px;top:17px" width="57" height="11"><use href="#bS" x="0"/><use href="#bd" x="8"/><use href="#b1" x="16"/><use href="#b0" x="24"/><use href="#b6" x="32"/><use href="#bB" x="40"/><use href="#bN" x="48"/></svg><span class="sr">S-106BN</span></td><td><svg class="g m" style="left:7px;top:17px" width="57" height="11"><use href="#bS" x="0"/><use href="#bd" x="8"/><use href="#b1" x="16"/><use href="#b1" x="24"/><use href="#b6" x="32"/><use href="#bB" x="40"/><use href="#bN" x="48"/></svg><span class="sr">S-116BN</span></td><td><svg class="g m" style="left:7px;top:17px" width="57" height="11"><use href="#bS" x="0"/><use href="#bd" x="8"/><use href="#b1" x="16"/><use href="#b2" x="24"/><use href="#b6" x="32"/><use href="#bB" x="40"/><use href="#bN" x="48"/></svg><span class="sr">S-126BN</span></td><td><svg class="g m" style="left:7px;top:17px" width="57" height="11"><use href="#bS" x="0"/><use href="#bd" x="8"/><use href="#b1" x="16"/><use href="#b3" x="24"/><use href="#b6" x="32"/><use href="#bB" x="40"/><use href="#bN" x="48"/></svg><span class="sr">S-136BN</span></td></tr>
<tr><td rowspan="2"><svg class="g k" style="left:31px;top:37px" width="25" height="11"><use href="#b1" x="0"/><use href="#bp" x="8"/><use href="#b1" x="16"/></svg><span class="sr">1.1</span></td><td><svg class="g" style="left:20px;top:13px" width="48" height="16"><use href="#zdz" fill="#000"/></svg><span class="sr">直带针</span></td><td></td><td></td><td></td><td></td><td><svg class="g m" style="left:10px;top:16px" width="57" height="11"><use href="#bS" x="0"/><use href="#bd" x="8"/><use href="#b0" x="16"/><use href="#b5" x="24"/><use href="#b7" x="32"/><use href="#bM" x="40"/><use href="#bN" x="48"/></svg><span class="sr">S-057MN</span></td><td><svg class="g m" style="left:8px;top:16px" width="57" height="11"><use href="#bS" x="0"/><use href="#bd" x="8"/><use href="#b0" x="16"/><use href="#b6" x="24"/><use href="#b7" x="32"/><use href="#bM" x="40"/><use href="#bN" x="48"/></svg><span class="sr">S-067MN</span></td><td><svg class="g m" style="left:8px;top:16px" width="57" height="11"><use href="#bS" x="0"/><use href="#bd" x="8"/><use href="#b0" x="16"/><use href="#b7" x="24"/><use href="#b7" x="32"/><use href="#bM" x="40"/><use href="#bN" x="48"/></svg><span class="sr">S-077MN</span></td><td><svg class="g m" style="left:7px;top:16px" width="57" height="11"><use href="#bS" x="0"/><use href="#bd" x="8"/><use href="#b0" x="16"/><use href="#b8" x="24"/><use href="#b7" x="32"/><use href="#bM" x="40"/><use href="#bN" x="48"/></svg><span class="sr">S-087MN</span></td><td><svg class="g m" style="left:7px;top:16px" width="57" height="11"><use href="#bS" x="0"/><use href="#bd" x="8"/><use href="#b0" x="16"/><use href="#b9" x="24"/><use href="#b7" x="32"/><use href="#bM" x="40"/><use href="#bN" x="48"/></svg><span class="sr">S-097MN</span></td><td><svg class="g m" style="left:7px;top:16px" width="57" height="11"><use href="#bS" x="0"/><use href="#bd" x="8"/><use href="#b1" x="16"/><use href="#b0" x="24"/><use href="#b7" x="32"/><use href="#bM" x="40"/><use href="#bN" x="48"/></svg><span class="sr">S-107MN</span></td><td><svg class="g m" style="left:7px;top:16px" width="57" height="11"><use href="#bS" x="0"/><use href="#bd" x="8"/><use href="#b1" x="16"/><use href="#b1" x="24"/><use href="#b7" x="32"/><use href="#bM" x="40"/><use href="#bN" x="48"/></svg><span class="sr">S-117MN</span></td><td><svg class="g m" style="left:7px;top:16px" width="57" height="11"><use href="#bS" x="0"/><use href="#bd" x="8"/><use href="#b1" x="16"/><use href="#b2" x="24"/><use href="#b7" x="32"/><use href="#bM" x="40"/><use href="#bN" x="48"/></svg><span class="sr">S-127MN</span></td><td><svg class="g m" style="left:7px;top:16px" width="57" height="11"><use href="#bS" x="0"/><use href="#bd" x="8"/><use href="#b1" x="16"/><use href="#b3" x="24"/><use href="#b7" x="32"/><use href="#bM" x="40"/><use href="#bN" x="48"/></svg><span class="sr">S-137MN</span></td></tr>
<tr><td><svg class="g" style="left:20px;top:13px" width="48" height="16"><use href="#cfz" fill="#000"/></svg><span class="sr">侧放针</span></td><td></td><td></td><td></td><td></td><td><svg class="g m" style="left:10px;top:16px" width="57" height="11"><use href="#bS" x="0"/><use href="#bd" x="8"/><use href="#b0" x="16"/><use href="#b5" x="24"/><use href="#b7" x="32"/><use href="#bB" x="40"/><use href="#bN" x="48"/></svg><span class="sr">S-057BN</span></td><td><svg class="g m" style="left:8px;top:16px" width="57" height="11"><use href="#bS" x="0"/><use href="#bd" x="8"/><use href="#b0" x="16"/><use href="#b6" x="24"/><use href="#b7" x="32"/><use href="#bB" x="40"/><use href="#bN" x="48"/></svg><span class="sr">S-067BN</span></td><td><svg class="g m" style="left:8px;top:16px" width="57" height="11"><use href="#bS" x="0"/><use href="#bd" x="8"/><use href="#b0" x="16"/><use href="#b7" x="24"/><use href="#b7" x="32"/><use href="#bB" x="40"/><use href="#bN" x="48"/></svg><span class="sr">S-077BN</span></td><td><svg class="g m" style="left:7px;top:16px" width="57" height="11"><use href="#bS" x="0"/><use href="#bd" x="8"/><use href="#b0" x="16"/><use href="#b8" x="24"/><use href="#b7" x="32"/><use href="#bB" x="40"/><use href="#bN" x="48"/></svg><span class="sr">S-087BN</span></td><td><svg class="g m" style="left:7px;top:16px" width="57" height="11"><use href="#bS" x="0"/><use href="#bd" x="8"/><use href="#b0" x="16"/><use href="#b9" x="24"/><use href="#b7" x="32"/><use href="#bB" x="40"/><use href="#bN" x="48"/></svg><span class="sr">S-097BN</span></td><td><svg class="g m" style="left:7px;top:16px" width="57" height="11"><use href="#bS" x="0"/><use href="#bd" x="8"/><use href="#b1" x="16"/><use href="#b0" x="24"/><use href="#b7" x="32"/><use href="#bB" x="40"/><use href="#bN" x="48"/></svg><span class="sr">S-107BN</span></td><td><svg class="g m" style="left:7px;top:16px" width="57" height="11"><use href="#bS" x="0"/><use href="#bd" x="8"/><use href="#b1" x="16"/><use href="#b1" x="24"/><use href="#b7" x="32"/><use href="#bB" x="40"/><use href="#bN" x="48"/></svg><span class="sr">S-117BN</span></td><td><svg class="g m" style="left:7px;top:16px" width="57" height="11"><use href="#bS" x="0"/><use href="#bd" x="8"/><use href="#b1" x="16"/><use href="#b2" x="24"/><use href="#b7" x="32"/><use href="#bB" x="40"/><use href="#bN" x="48"/></svg><span class="sr">S-127BN</span></td><td><svg class="g m" style="left:7px;top:16px" width="57" height="11"><use href="#bS" x="0"/><use href="#bd" x="8"/><use href="#b1" x="16"/><use href="#b3" x="24"/><use href="#b7" x="32"/><use href="#bB" x="40"/><use href="#bN" x="48"/></svg><span class="sr">S-137BN</span></td></tr>
<tr><td rowspan="2"><svg class="g k" style="left:31px;top:36px" width="25" height="11"><use href="#b1" x="0"/><use href="#bp" x="8"/><use href="#b2" x="16"/></svg><span class="sr">1.2</span></td><td><svg class="g" style="left:20px;top:13px" width="48" height="16"><use href="#zdz" fill="#000"/></svg><span class="sr">直带针</span></td><td></td><td></td><td></td><td></td><td><svg class="g m" style="left:10px;top:16px" width="57" height="11"><use href="#bS" x="0"/><use href="#bd" x="8"/><use href="#b0" x="16"/><use href="#b5" x="24"/><use href="#b8" x="32"/><use href="#bM" x="40"/><use href="#bN" x="48"/></svg><span class="sr">S-058MN</span></td><td><svg class="g m" style="left:8px;top:16px" width="57" height="11"><use href="#bS" x="0"/><use href="#bd" x="8"/><use href="#b0" x="16"/><use href="#b6" x="24"/><use href="#b8" x="32"/><use href="#bM" x="40"/><use href="#bN" x="48"/></svg><span class="sr">S-068MN</span></td><td><svg class="g m" style="left:8px;top:16px" width="57" height="11"><use href="#bS" x="0"/><use href="#bd" x="8"/><use href="#b0" x="16"/><use href="#b7" x="24"/><use href="#b8" x="32"/><use href="#bM" x="40"/><use href="#bN" x="48"/></svg><span class="sr">S-078MN</span></td><td><svg class="g m" style="left:7px;top:16px" width="57" height="11"><use href="#bS" x="0"/><use href="#bd" x="8"/><use href="#b0" x="16"/><use href="#b8" x="24"/><use href="#b8" x="32"/><use href="#bM" x="40"/><use href="#bN" x="48"/></svg><span class="sr">S-088MN</span></td><td><svg class="g m" style="left:7px;top:16px" width="57" height="11"><use href="#bS" x="0"/><use href="#bd" x="8"/><use href="#b0" x="16"/><use href="#b9" x="24"/><use href="#b8" x="32"/><use href="#bM" x="40"/><use href="#bN" x="48"/></svg><span class="sr">S-098MN</span></td><td><svg class="g m" style="left:7px;top:16px" width="57" height="11"><use href="#bS" x="0"/><use href="#bd" x="8"/><use href="#b1" x="16"/><use href="#b0" x="24"/><use href="#b8" x="32"/><use href="#bM" x="40"/><use href="#bN" x="48"/></svg><span class="sr">S-108MN</span></td><td><svg class="g m" style="left:7px;top:16px" width="57" height="11"><use href="#bS" x="0"/><use href="#bd" x="8"/><use href="#b1" x="16"/><use href="#b1" x="24"/><use href="#b8" x="32"/><use href="#bM" x="40"/><use href="#bN" x="48"/></svg><span class="sr">S-118MN</span></td><td><svg class="g m" style="left:7px;top:16px" width="57" height="11"><use href="#bS" x="0"/><use href="#bd" x="8"/><use href="#b1" x="16"/><use href="#b2" x="24"/><use href="#b8" x="32"/><use href="#bM" x="40"/><use href="#bN" x="48"/></svg><span class="sr">S-128MN</span></td><td><svg class="g m" style="left:7px;top:16px" width="57" height="11"><use href="#bS" x="0"/><use href="#bd" x="8"/><use href="#b1" x="16"/><use href="#b3" x="24"/><use href="#b8" x="32"/><use href="#bM" x="40"/><use href="#bN" x="48"/></svg><span class="sr">S-138MN</span></td></tr>
<tr><td><svg class="g" style="left:20px;top:13px" width="48" height="16"><use href="#cfz" fill="#000"/></svg><span class="sr">侧放针</span></td><td></td><td></td><td></td><td></td><td><svg class="g m" style="left:10px;top:16px" width="57" height="11"><use href="#bS" x="0"/><use href="#bd" x="8"/><use href="#b0" x="16"/><use href="#b5" x="24"/><use href="#b8" x="32"/><use href="#bB" x="40"/><use href="#bN" x="48"/></svg><span class="sr">S-058BN</span></td><td><svg class="g m" style="left:8px;top:16px" width="57" height="11"><use href="#bS" x="0"/><use href="#bd" x="8"/><use href="#b0" x="16"/><use href="#b6" x="24"/><use href="#b8" x="32"/><use href="#bB" x="40"/><use href="#bN" x="48"/></svg><span class="sr">S-068BN</span></td><td><svg class="g m" style="left:8px;top:16px" width="57" height="11"><use href="#bS" x="0"/><use href="#bd" x="8"/><use href="#b0" x="16"/><use href="#b7" x="24"/><use href="#b8" x="32"/><use href="#bB" x="40"/><use href="#bN" x="48"/></svg><span class="sr">S-078BN</span></td><td><svg class="g m" style="left:7px;top:16px" width="57" height="11"><use href="#bS" x="0"/><use href="#bd" x="8"/><use href="#b0" x="16"/><use href="#b8" x="24"/><use href="#b8" x="32"/><use href="#bB" x="40"/><use href="#bN" x="48"/></svg><span class="sr">S-088BN</span></td><td><svg class="g m" style="left:7px;top:16px" width="57" height="11"><use href="#bS" x="0"/><use href="#bd" x="8"/><use href="#b0" x="16"/><use href="#b9" x="24"/><use href="#b8" x="32"/><use href="#bB" x="40"/><use href="#bN" x="48"/></svg><span class="sr">S-098BN</span></td><td><svg class="g m" style="left:7px;top:16px" width="57" height="11"><use href="#bS" x="0"/><use href="#bd" x="8"/><use href="#b1" x="16"/><use href="#b0" x="24"/><use href="#b8" x="32"/><use href="#bB" x="40"/><use href="#bN" x="48"/></svg><span class="sr">S-108BN</span></td><td><svg class="g m" style="left:7px;top:16px" width="57" height="11"><use href="#bS" x="0"/><use href="#bd" x="8"/><use href="#b1" x="16"/><use href="#b1" x="24"/><use href="#b8" x="32"/><use href="#bB" x="40"/><use href="#bN" x="48"/></svg><span class="sr">S-118BN</span></td><td><svg class="g m" style="left:7px;top:16px" width="57" height="11"><use href="#bS" x="0"/><use href="#bd" x="8"/><use href="#b1" x="16"/><use href="#b2" x="24"/><use href="#b8" x="32"/><use href="#bB" x="40"/><use href="#bN" x="48"/></svg><span class="sr">S-128BN</span></td><td><svg class="g m" style="left:7px;top:16px" width="57" height="11"><use href="#bS" x="0"/><use href="#bd" x="8"/><use href="#b1" x="16"/><use href="#b3" x="24"/><use href="#b8" x="32"/><use href="#bB" x="40"/><use href="#bN" x="48"/></svg><span class="sr">S-138BN</span></td></tr>
<tr><td rowspan="2"><svg class="g k" style="left:31px;top:36px" width="25" height="11"><use href="#b1" x="0"/><use href="#bp" x="8"/><use href="#b6" x="16"/></svg><span class="sr">1.6</span></td><td><svg class="g" style="left:20px;top:13px" width="48" height="16"><use href="#zdz" fill="#000"/></svg><span class="sr">直带针</span></td><td></td><td></td><td></td><td></td><td><svg class="g m" style="left:10px;top:16px" width="57" height="11"><use href="#bS" x="0"/><use href="#bd" x="8"/><use href="#b0" x="16"/><use href="#b5" x="24"/><use href="#b9" x="32"/><use href="#bM" x="40"/><use href="#bN" x="48"/></svg><span class="sr">S-059MN</span></td><td><svg class="g m" style="left:8px;top:16px" width="57" height="11"><use href="#bS" x="0"/><use href="#bd" x="8"/><use href="#b0" x="16"/><use href="#b6" x="24"/><use href="#b9" x="32"/><use href="#bM" x="40"/><use href="#bN" x="48"/></svg><span class="sr">S-069MN</span></td><td><svg class="g m" style="left:8px;top:16px" width="57" height="11"><use href="#bS" x="0"/><use href="#bd" x="8"/><use href="#b0" x="16"/><use href="#b7" x="24"/><use href="#b9" x="32"/><use href="#bM" x="40"/><use href="#bN" x="48"/></svg><span class="sr">S-079MN</span></td><td><svg class="g m" style="left:7px;top:16px" width="57" height="11"><use href="#bS" x="0"/><use href="#bd" x="8"/><use href="#b0" x="16"/><use href="#b8" x="24"/><use href="#b9" x="32"/><use href="#bM" x="40"/><use href="#bN" x="48"/></svg><span class="sr">S-089MN</span></td><td><svg class="g m" style="left:7px;top:16px" width="57" height="11"><use href="#bS" x="0"/><use href="#bd" x="8"/><use href="#b0" x="16"/><use href="#b9" x="24"/><use href="#b9" x="32"/><use href="#bM" x="40"/><use href="#bN" x="48"/></svg><span class="sr">S-099MN</span></td><td><svg class="g m" style="left:7px;top:16px" width="57" height="11"><use href="#bS" x="0"/><use href="#bd" x="8"/><use href="#b1" x="16"/><use href="#b0" x="24"/><use href="#b9" x="32"/><use href="#bM" x="40"/><use href="#bN" x="48"/></svg><span class="sr">S-109MN</span></td><td><svg class="g m" style="left:7px;top:16px" width="57" height="11"><use href="#bS" x="0"/><use href="#bd" x="8"/><use href="#b1" x="16"/><use href="#b1" x="24"/><use href="#b9" x="32"/><use href="#bM" x="40"/><use href="#bN" x="48"/></svg><span class="sr">S-119MN</span></td><td><svg class="g m" style="left:7px;top:16px" width="57" height="11"><use href="#bS" x="0"/><use href="#bd" x="8"/><use href="#b1" x="16"/><use href="#b2" x="24"/><use href="#b9" x="32"/><use href="#bM" x="40"/><use href="#bN" x="48"/></svg><span class="sr">S-129MN</span></td><td><svg class="g m" style="left:7px;top:16px" width="57" height="11"><use href="#bS" x="0"/><use href="#bd" x="8"/><use href="#b1" x="16"/><use href="#b3" x="24"/><use href="#b9" x="32"/><use href="#bM" x="40"/><use href="#bN" x="48"/></svg><span class="sr">S-139MN</span></td></tr>
<tr><td><svg class="g" style="left:20px;top:12px" width="48" height="16"><use href="#cfz" fill="#000"/></svg><span class="sr">侧放针</span></td><td></td><td></td><td></td><td></td><td><svg class="g m" style="left:10px;top:15px" width="57" height="11"><use href="#bS" x="0"/><use href="#bd" x="8"/><use href="#b0" x="16"/><use href="#b5" x="24"/><use href="#b9" x="32"/><use href="#bB" x="40"/><use href="#bN" x="48"/></svg><span class="sr">S-059BN</span></td><td><svg class="g m" style="left:8px;top:15px" width="57" height="11"><use href="#bS" x="0"/><use href="#bd" x="8"/><use href="#b0" x="16"/><use href="#b6" x="24"/><use href="#b9" x="32"/><use href="#bB" x="40"/><use href="#bN" x="48"/></svg><span class="sr">S-069BN</span></td><td><svg class="g m" style="left:8px;top:15px" width="57" height="11"><use href="#bS" x="0"/><use href="#bd" x="8"/><use href="#b0" x="16"/><use href="#b7" x="24"/><use href="#b9" x="32"/><use href="#bB" x="40"/><use href="#bN" x="48"/></svg><span class="sr">S-079BN</span></td><td><svg class="g m" style="left:7px;top:15px" width="57" height="11"><use href="#bS" x="0"/><use href="#bd" x="8"/><use href="#b0" x="16"/><use href="#b8" x="24"/><use href="#b9" x="32"/><use href="#bB" x="40"/><use href="#bN" x="48"/></svg><span class="sr">S-089BN</span></td><td><svg class="g m" style="left:7px;top:15px" width="57" height="11"><use href="#bS" x="0"/><use href="#bd" x="8"/><use href="#b0" x="16"/><use href="#b9" x="24"/><use href="#b9" x="32"/><use href="#bB" x="40"/><use href="#bN" x="48"/></svg><span class="sr">S-099BN</span></td><td><svg class="g m" style="left:7px;top:15px" width="57" height="11"><use href="#bS" x="0"/><use href="#bd" x="8"/><use href="#b1" x="16"/><use href="#b0" x="24"/><use href="#b9" x="32"/><use href="#bB" x="40"/><use href="#bN" x="48"/></svg><span class="sr">S-109BN</span></td><td><svg class="g m" style="left:7px;top:15px" width="57" height="11"><use href="#bS" x="0"/><use href="#bd" x="8"/><use href="#b1" x="16"/><use href="#b1" x="24"/><use href="#b9" x="32"/><use href="#bB" x="40"/><use href="#bN" x="48"/></svg><span class="sr">S-119BN</span></td><td><svg class="g m" style="left:7px;top:15px" width="57" height="11"><use href="#bS" x="0"/><use href="#bd" x="8"/><use href="#b1" x="16"/><use href="#b2" x="24"/><use href="#b9" x="32"/><use href="#bB" x="40"/><use href="#bN" x="48"/></svg><span class="sr">S-129BN</span></td><td><svg class="g m" style="left:7px;top:15px" width="57" height="11"><use href="#bS" x="0"/><use href="#bd" x="8"/><use href="#b1" x="16"/><use href="#b3" x="24"/><use href="#b9" x="32"/><use href="#bB" x="40"/><use href="#bN" x="48"/></svg><span class="sr">S-139BN</span></td></tr>
</table>
</body></html>
